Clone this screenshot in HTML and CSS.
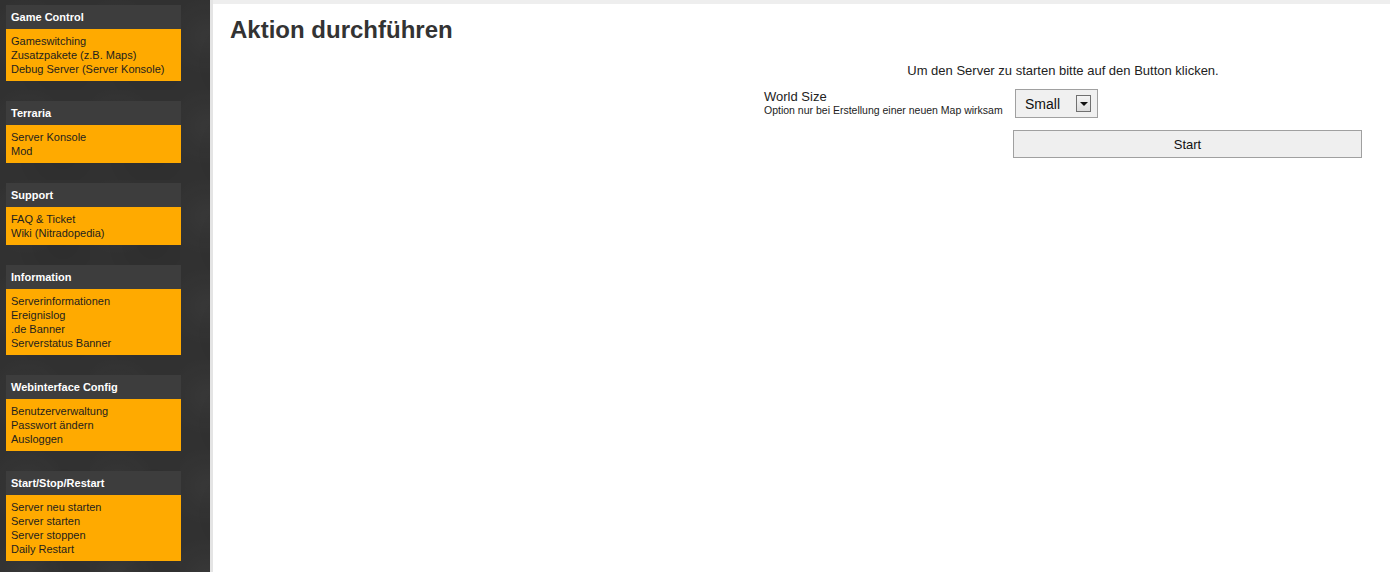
FILE: index.html
```html
<!DOCTYPE html>
<html lang="de">
<head>
  <meta charset="UTF-8" />
  <title>Aktion durchführen</title>
  <link rel="stylesheet" href="styles.css">
</head>
<body>
  <div id="page">
    <div id="sidebar">
      <div class="menu">
        <div class="menu-head">Game Control</div>
        <div class="menu-body">
          <a href="#">Gameswitching</a>
          <a href="#">Zusatzpakete (z.B. Maps)</a>
          <a href="#">Debug Server (Server Konsole)</a>
        </div>
      </div>
      <div class="menu">
        <div class="menu-head">Terraria</div>
        <div class="menu-body">
          <a href="#">Server Konsole</a>
          <a href="#">Mod</a>
        </div>
      </div>
      <div class="menu">
        <div class="menu-head">Support</div>
        <div class="menu-body">
          <a href="#">FAQ &amp; Ticket</a>
          <a href="#">Wiki (Nitradopedia)</a>
        </div>
      </div>
      <div class="menu">
        <div class="menu-head">Information</div>
        <div class="menu-body">
          <a href="#">Serverinformationen</a>
          <a href="#">Ereignislog</a>
          <a href="#">.de Banner</a>
          <a href="#">Serverstatus Banner</a>
        </div>
      </div>
      <div class="menu">
        <div class="menu-head">Webinterface Config</div>
        <div class="menu-body">
          <a href="#">Benutzerverwaltung</a>
          <a href="#">Passwort ändern</a>
          <a href="#">Ausloggen</a>
        </div>
      </div>
      <div class="menu">
        <div class="menu-head">Start/Stop/Restart</div>
        <div class="menu-body">
          <a href="#">Server neu starten</a>
          <a href="#">Server starten</a>
          <a href="#">Server stoppen</a>
          <a href="#">Daily Restart</a>
        </div>
      </div>
    </div>

    <div id="main">
      <div id="topbar"></div>
      <div id="content">
        <h1>Aktion durchführen</h1>

        <div class="action">
          <p class="hint">Um den Server zu starten bitte auf den Button klicken.</p>
          <div class="row">
            <div class="label">
              World Size
              <small>Option nur bei Erstellung einer neuen Map wirksam</small>
            </div>
            <div class="field">
              <div class="select">
                <span>Small</span>
                <span class="arrow"></span>
              </div>
            </div>
          </div>
          <div class="row">
            <div class="label"></div>
            <div class="field">
              <button class="start">Start</button>
            </div>
          </div>
        </div>
      </div>
    </div>
  </div>
</body>
</html>
```

FILE: styles.css
```css
body {
  margin: 0;
  padding: 0;
  font-family: "Liberation Sans", Arial, sans-serif;
  background: #fff;
}

#page {
  display: flex;
  min-height: 572px;
}

#sidebar {
  width: 213px;
  flex-shrink: 0;
  padding: 5px 0 0 6px;
  box-sizing: border-box;
  background-color: #313131;
  background-image:
    radial-gradient(circle at 30% 40%, rgba(255,255,255,0.03) 0, rgba(255,255,255,0) 40px),
    radial-gradient(circle at 70% 70%, rgba(0,0,0,0.08) 0, rgba(0,0,0,0) 50px);
  background-size: 90px 90px;
  border-right: 3px solid #e4e4e4;
  display: flex;
  flex-direction: column;
  gap: 20px;
}

.menu {
  width: 175px;
}

.menu-head {
  height: 24px;
  line-height: 24px;
  padding-left: 5px;
  background: #3d3d3d;
  color: #fff;
  font-size: 11px;
  font-weight: bold;
}

.menu-body {
  background: #ffaa00;
  padding: 5px;
}

.menu-body a {
  display: block;
  color: #1e1e1e;
  text-decoration: none;
  font-size: 11px;
  line-height: 14px;
}

#main {
  flex: 1;
  display: flex;
  flex-direction: column;
}

#topbar {
  height: 4px;
  background: #eeeeee;
}

#content {
  padding: 0 28px 0 17px;
}

h1 {
  margin: 13px 0 0 0;
  font-size: 24px;
  color: #333;
  line-height: 26px;
}

.action {
  width: 598px;
  margin-left: auto;
  margin-top: 20px;
  font-size: 13px;
  color: #222;
}

.hint {
  margin: 0 0 11px 0;
  text-align: center;
  line-height: 15px;
}

.row {
  display: flex;
  align-items: flex-start;
}

.row + .row {
  margin-top: 12px;
}

.label {
  width: 249px;
  line-height: 15px;
}

.label small {
  display: block;
  font-size: 10.5px;
  line-height: 12px;
}

.field {
  flex: 1;
}

.select {
  margin-left: 2px;
  width: 83px;
  height: 29px;
  box-sizing: border-box;
  border: 1px solid #a0a0a0;
  background: #f0f0f0;
  display: flex;
  align-items: center;
  justify-content: space-between;
  padding: 0 6px 0 9px;
  font-size: 14px;
  color: #111;
}

.arrow {
  width: 13px;
  height: 15px;
  border: 1px solid #707070;
  background: linear-gradient(#f4f4f4, #dcdcdc);
  position: relative;
}

.arrow::after {
  content: "";
  position: absolute;
  left: 3px;
  top: 6px;
  border-left: 4px solid transparent;
  border-right: 4px solid transparent;
  border-top: 4px solid #111;
}

.start {
  display: block;
  width: 100%;
  height: 28px;
  border: 1px solid #a0a0a0;
  background: #efefef;
  font-family: "Liberation Sans", Arial, sans-serif;
  font-size: 13px;
  color: #111;
  cursor: pointer;
}
```
